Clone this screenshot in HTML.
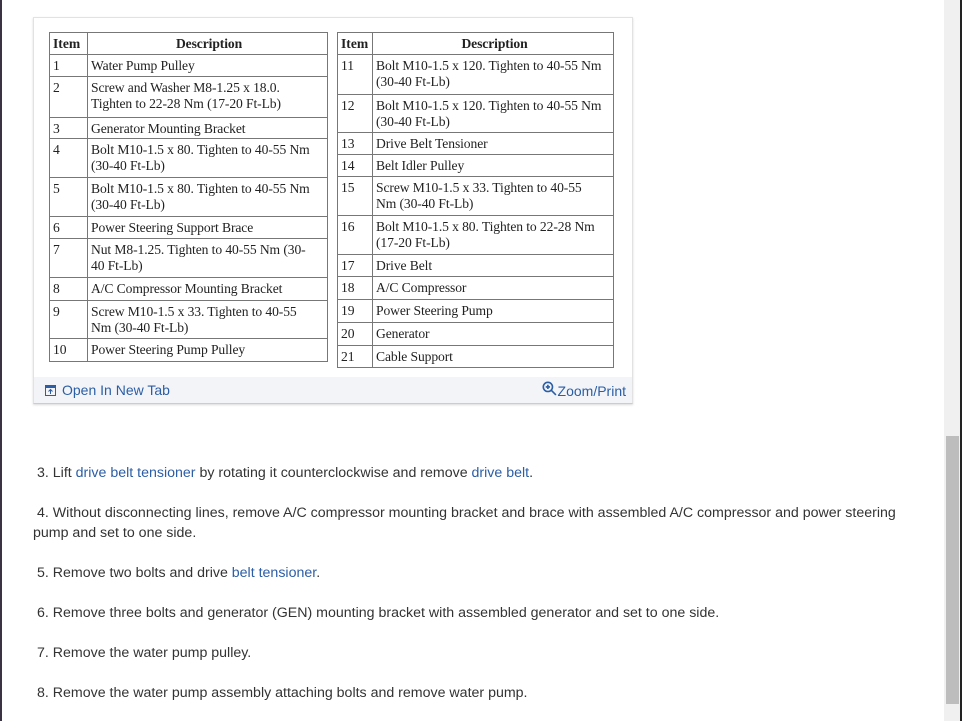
<!DOCTYPE html>
<html><head><meta charset="utf-8"><style>
body{margin:0;width:962px;height:721px;background:#fff;position:relative;overflow:hidden;font-family:"Liberation Sans",sans-serif}
.lb{position:absolute;left:0;top:0;width:2px;height:721px;background:#3a3344}
.rb{position:absolute;right:0;top:0;width:2px;height:721px;background:#222}
.sb{position:absolute;left:944px;top:0;width:16px;height:721px;background:#f0f0f0}
.th{position:absolute;left:946px;top:436px;width:13px;height:268px;background:#bdbdbd}
.panel{position:absolute;left:33px;top:17px;width:598px;height:385px;border:1px solid #e2e2e2;border-bottom:1px solid #ccc;background:#fff;box-shadow:0 1px 2px rgba(0,0,0,.15)}
.bar{position:absolute;left:34px;top:377px;width:598px;height:26px;background:#f3f4f8}
.r{position:absolute;border:1px solid #777;box-sizing:border-box;font-family:"Liberation Serif",serif;font-size:13.6px;line-height:15.5px;color:#222;background:#fff;white-space:nowrap}
.r .i{position:absolute;left:0;top:0;bottom:0;padding:3px 0 0 3px;box-sizing:border-box}
.r .d{position:absolute;top:0;bottom:0;right:0;border-left:1px solid #777;padding:3px 0 0 3px;box-sizing:border-box;letter-spacing:-0.1px}
.L{left:49px;width:279px}.L .i{width:37px}.L .d{left:37px}
.R{left:337px;width:277px}.R .i{width:34px}.R .d{left:34px}
.h{font-weight:bold}.h .d{text-align:center}
.p{position:absolute;left:37px;font-size:14.2px;color:#333;line-height:20px;width:880px}
a{color:#2b5ea5;text-decoration:none}
</style></head><body>
<div class="lb"></div><div class="rb"></div><div class="sb"></div><div class="th"></div>
<div class="panel"></div><div class="bar"></div>

<div class="r L h" style="top:32px;height:23px"><div class="i">Item</div><div class="d">Description</div></div>
<div class="r L" style="top:54px;height:23px"><div class="i">1</div><div class="d">Water Pump Pulley</div></div>
<div class="r L" style="top:76px;height:42px"><div class="i">2</div><div class="d">Screw and Washer M8-1.25 x 18.0.<br>Tighten to 22-28 Nm (17-20 Ft-Lb)</div></div>
<div class="r L" style="top:117px;height:22px"><div class="i">3</div><div class="d">Generator Mounting Bracket</div></div>
<div class="r L" style="top:138px;height:40px"><div class="i">4</div><div class="d">Bolt M10-1.5 x 80. Tighten to 40-55 Nm<br>(30-40 Ft-Lb)</div></div>
<div class="r L" style="top:177px;height:40px"><div class="i">5</div><div class="d">Bolt M10-1.5 x 80. Tighten to 40-55 Nm<br>(30-40 Ft-Lb)</div></div>
<div class="r L" style="top:216px;height:23px"><div class="i">6</div><div class="d">Power Steering Support Brace</div></div>
<div class="r L" style="top:238px;height:40px"><div class="i">7</div><div class="d">Nut M8-1.25. Tighten to 40-55 Nm (30-<br>40 Ft-Lb)</div></div>
<div class="r L" style="top:277px;height:24px"><div class="i">8</div><div class="d">A/C Compressor Mounting Bracket</div></div>
<div class="r L" style="top:300px;height:39px"><div class="i">9</div><div class="d">Screw M10-1.5 x 33. Tighten to 40-55<br>Nm (30-40 Ft-Lb)</div></div>
<div class="r L" style="top:338px;height:24px"><div class="i">10</div><div class="d">Power Steering Pump Pulley</div></div>

<div class="r R h" style="top:32px;height:23px"><div class="i">Item</div><div class="d">Description</div></div>
<div class="r R" style="top:54px;height:41px"><div class="i">11</div><div class="d">Bolt M10-1.5 x 120. Tighten to 40-55 Nm<br>(30-40 Ft-Lb)</div></div>
<div class="r R" style="top:94px;height:39px"><div class="i">12</div><div class="d">Bolt M10-1.5 x 120. Tighten to 40-55 Nm<br>(30-40 Ft-Lb)</div></div>
<div class="r R" style="top:132px;height:23px"><div class="i">13</div><div class="d">Drive Belt Tensioner</div></div>
<div class="r R" style="top:154px;height:23px"><div class="i">14</div><div class="d">Belt Idler Pulley</div></div>
<div class="r R" style="top:176px;height:40px"><div class="i">15</div><div class="d">Screw M10-1.5 x 33. Tighten to 40-55<br>Nm (30-40 Ft-Lb)</div></div>
<div class="r R" style="top:215px;height:40px"><div class="i">16</div><div class="d">Bolt M10-1.5 x 80. Tighten to 22-28 Nm<br>(17-20 Ft-Lb)</div></div>
<div class="r R" style="top:254px;height:23px"><div class="i">17</div><div class="d">Drive Belt</div></div>
<div class="r R" style="top:276px;height:24px"><div class="i">18</div><div class="d">A/C Compressor</div></div>
<div class="r R" style="top:299px;height:24px"><div class="i">19</div><div class="d">Power Steering Pump</div></div>
<div class="r R" style="top:322px;height:24px"><div class="i">20</div><div class="d">Generator</div></div>
<div class="r R" style="top:345px;height:23px"><div class="i">21</div><div class="d">Cable Support</div></div>

<div style="position:absolute;left:45px;top:382px;font-size:14px;color:#2b5ea5;line-height:16px">
<svg width="11" height="11" viewBox="0 0 11 11" style="vertical-align:-1px;margin-right:6px"><rect x="0.5" y="0.5" width="10" height="10" fill="none" stroke="#2b5ea5"/><rect x="0.5" y="0.5" width="10" height="2.5" fill="#2b5ea5"/><path d="M5.5 9V5M3.5 6.5l2-2 2 2" stroke="#2b5ea5" fill="none"/></svg>Open In New Tab</div>
<div style="position:absolute;right:336px;top:381px;font-size:14px;color:#2b5ea5;line-height:16px;white-space:nowrap">
<svg width="15" height="15" viewBox="0 0 14 14" style="vertical-align:0px;margin-right:1px"><circle cx="5.5" cy="5.5" r="4.3" fill="none" stroke="#2b5ea5" stroke-width="1.5"/><path d="M8.7 8.7L13 13M5.5 3.5v4M3.5 5.5h4" stroke="#2b5ea5" stroke-width="1.5"/></svg>Zoom/Print</div>

<div class="p" style="top:463px">3. Lift <a>drive belt tensioner</a> by rotating it counterclockwise and remove <a>drive belt</a>.</div>
<div class="p" style="top:503px;left:33px;text-indent:4px">4. Without disconnecting lines, remove A/C compressor mounting bracket and brace with assembled A/C compressor and power steering pump and set to one side.</div>
<div class="p" style="top:563px">5. Remove two bolts and drive <a>belt tensioner</a>.</div>
<div class="p" style="top:603px">6. Remove three bolts and generator (GEN) mounting bracket with assembled generator and set to one side.</div>
<div class="p" style="top:643px">7. Remove the water pump pulley.</div>
<div class="p" style="top:683px">8. Remove the water pump assembly attaching bolts and remove water pump.</div>
</body></html>
